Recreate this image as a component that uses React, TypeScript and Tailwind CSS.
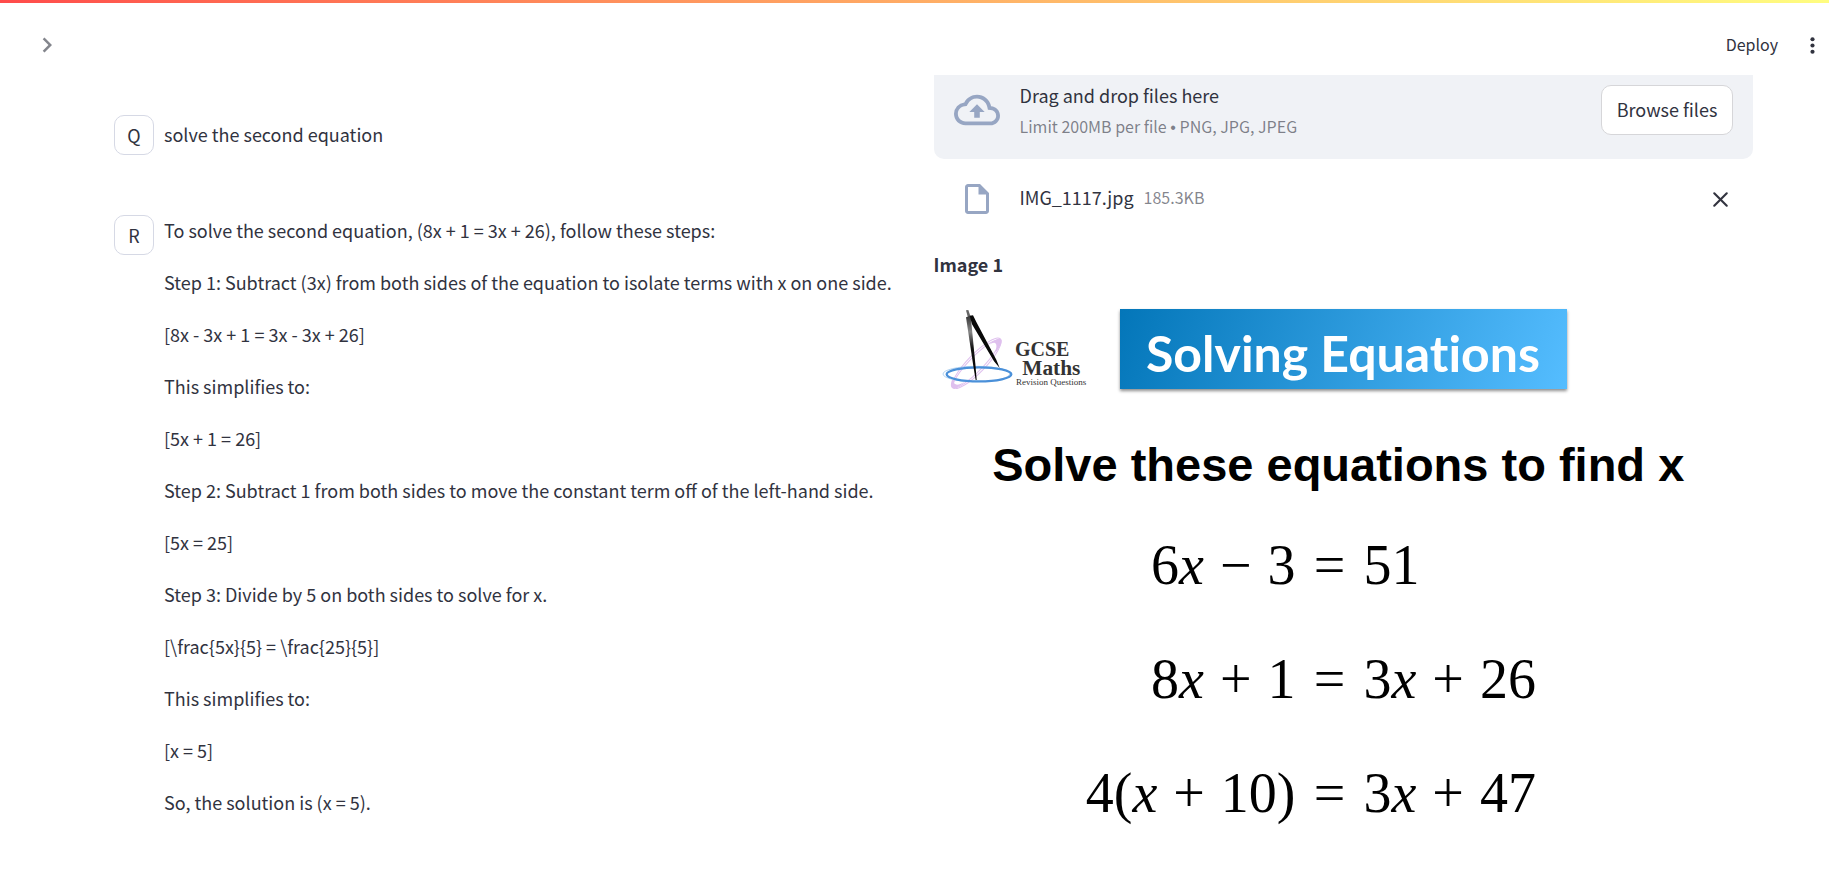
import { X } from "lucide-react";
import type { ReactNode } from "react";

const answer = [
  "To solve the second equation, (8x + 1 = 3x + 26), follow these steps:",
  "Step 1: Subtract (3x) from both sides of the equation to isolate terms with x on one side.",
  "[8x - 3x + 1 = 3x - 3x + 26]",
  "This simplifies to:",
  "[5x + 1 = 26]",
  "Step 2: Subtract 1 from both sides to move the constant term off of the left-hand side.",
  "[5x = 25]",
  "Step 3: Divide by 5 on both sides to solve for x.",
  "[\\frac{5x}{5} = \\frac{25}{5}]",
  "This simplifies to:",
  "[x = 5]",
  "So, the solution is (x = 5).",
];

function Header() {
  return (
    <header>
      <div className="h-[3px] bg-linear-to-r from-[#ff4b4b] to-[#fffd80]" />
      <div className="flex h-[72px] items-center justify-between pt-3 pr-1 pl-8">
        <button type="button" aria-label="Open sidebar" className="text-[#31333f]/60">
          <svg viewBox="0 0 24 24" className="size-[30px] fill-current">
            <path d="M10 6 8.59 7.41 13.17 12l-4.58 4.59L10 18l6-6z" />
          </svg>
        </button>
        <div className="flex items-center gap-[22px]">
          <button type="button" className="pb-0.5 text-base leading-6">
            Deploy
          </button>
          <button type="button" aria-label="Main menu">
            <svg viewBox="0 0 24 24" className="size-[25px] fill-current">
              <circle cx="12" cy="6" r="2" />
              <circle cx="12" cy="12" r="2" />
              <circle cx="12" cy="18" r="2" />
            </svg>
          </button>
        </div>
      </div>
    </header>
  );
}

function Message({ avatar, children }: { avatar: string; children: ReactNode }) {
  return (
    <article className="flex items-start gap-[10px] p-5">
      <div className="flex size-10 shrink-0 items-center justify-center rounded-[10px] border border-[#d6d9e5] leading-8">
        {avatar}
      </div>
      <div className="min-w-0 flex-1">{children}</div>
    </article>
  );
}

function Uploader() {
  return (
    <section aria-label="File uploader">
      <div className="flex h-[84px] items-start gap-5 rounded-b-[10px] bg-[#f0f2f6] px-5 pt-[10px]">
        <svg viewBox="0 0 24 24" className="mt-0.5 size-[46px] shrink-0 fill-[#97a6c3]">
          <path d="M19.35 10.04A7.49 7.49 0 0 0 12 4C9.11 4 6.6 5.64 5.35 8.04A5.994 5.994 0 0 0 0 14c0 3.31 2.69 6 6 6h13c2.76 0 5-2.24 5-5 0-2.64-2.05-4.78-4.65-4.96zM19 18H6c-2.21 0-4-1.79-4-4 0-2.05 1.53-3.76 3.56-3.97l1.07-.11.5-.95A5.469 5.469 0 0 1 12 6c2.62 0 4.88 1.86 5.39 4.43l.3 1.5 1.53.11A2.98 2.98 0 0 1 22 15c0 1.65-1.35 3-3 3zM8 13h2.55v3h2.9v-3H16l-4-4z" />
        </svg>
        <div className="flex-1">
          <p className="leading-5">Drag and drop files here</p>
          <p className="mt-[5px] text-base leading-8 text-[#31333f]/60">
            Limit 200MB per file <span className="font-['Liberation_Sans'] leading-none">•</span> PNG, JPG, JPEG
          </p>
        </div>
        <button
          type="button"
          className="h-[50px] w-[132px] rounded-[10px] border border-[#d6d6d9] bg-white pb-0.5 leading-8"
        >
          Browse files
        </button>
      </div>
      <div className="flex items-center pt-[22px] pr-5 pl-[25px]">
        <svg viewBox="0 0 24 24" className="mr-[25px] size-9 fill-[#97a6c3]">
          <path d="M14 2H6c-1.1 0-1.99.9-1.99 2L4 20c0 1.1.89 2 1.99 2H18c1.1 0 2-.9 2-2V8l-6-6zM6 20V4h7v5h5v11H6z" />
        </svg>
        <span className="mr-[10px] pb-1 leading-8">IMG_1117.jpg</span>
        <span className="flex-1 pb-1 text-base leading-8 text-[#31333f]/60">185.3KB</span>
        <button type="button" aria-label="Remove IMG_1117.jpg">
          <X size={25} strokeWidth={2} />
        </button>
      </div>
    </section>
  );
}

function Logo() {
  return (
    <svg viewBox="12 30 468 300" className="h-[100px] w-[156px] shrink-0" role="img" aria-label="GCSE Maths Revision Questions">
      <defs>
        <linearGradient id="leg" x1="0" y1="0" x2="0" y2="1">
          <stop offset="0" stopColor="#333" />
          <stop offset=".25" stopColor="#888" />
          <stop offset=".5" stopColor="#111" />
          <stop offset="1" stopColor="#000" />
        </linearGradient>
      </defs>
      <g fill="none" stroke="#dfc0ee">
        <ellipse cx="140" cy="220" rx="102" ry="27" strokeWidth="3" transform="rotate(-46 140 220)" />
        <ellipse cx="138" cy="222" rx="97" ry="21" strokeWidth="3" transform="rotate(-46 138 222)" />
      </g>
      <path d="M178 165c14-16 27-21 35-18 6 8-3 25-17 41 4-15 5-25-1-29-5-2-10 1-17 6zM66 270c-5 12-5 25 4 25 12 0 23-10 34-20-12 7-22 11-27 8-5-2-6-7-5-13z" fill="#dfc0ee" />
      <ellipse cx="139" cy="252" rx="100" ry="23" fill="none" stroke="#8dbce9" strokeWidth="2" />
      <ellipse cx="147" cy="253" rx="97" ry="21" fill="none" stroke="#4a90d9" strokeWidth="7" />
      <path d="m108 61 7-1 6 18-6 9z" fill="#666" />
      <path d="m108 82 14-5 14 144 4 49h-3l-8-48z" fill="url(#leg)" />
      <path d="m119 77 10-1 10 20 60 113 10 25-17-20-66-111z" fill="#080808" />
      <text fill="#333" fontFamily="'Liberation Serif', serif" fontWeight="700">
        <tspan x="255" y="199" fontSize="60">GCSE</tspan>
        <tspan x="277" y="255" fontSize="64">Maths</tspan>
        <tspan x="258" y="286" fontSize="27" fontWeight="400">Revision Questions</tspan>
      </text>
    </svg>
  );
}

function Op({ children }: { children: string }) {
  return <span className="mx-4">{children}</span>;
}

function Equation({ left, right }: { left: ReactNode; right: ReactNode }) {
  return (
    <div className="grid grid-cols-[362px_68px_1fr] text-[56px] leading-[114px]">
      <span className="text-right">{left}</span>
      <span className="text-center">=</span>
      <span>{right}</span>
    </div>
  );
}

function Worksheet() {
  return (
    <figure className="bg-white text-black">
      <div className="flex items-start gap-[30px]">
        <Logo />
        <div className="mt-[9px] flex h-20 w-[447px] items-center justify-center bg-linear-[110deg] from-[#0376b9] to-[#55bdff] pt-2 font-['Lato'] text-[50px] leading-[60px] font-bold text-white shadow-[0_2px_3px_rgba(0,0,0,0.45)] [font-variant-ligatures:none]">
          Solving Equations
        </div>
      </div>
      <h2 className="mt-[38px] pr-[10px] text-center font-['Liberation_Sans'] text-[47px] leading-[54px] font-bold">
        Solve these equations to find x
      </h2>
      <div className="mt-4 font-['Liberation_Serif']">
        <Equation left={<>6<i>x</i><Op>−</Op>3</>} right="51" />
        <Equation left={<>8<i>x</i><Op>+</Op>1</>} right={<>3<i>x</i><Op>+</Op>26</>} />
        <Equation left={<>4(<i>x</i><Op>+</Op>10)</>} right={<>3<i>x</i><Op>+</Op>47</>} />
      </div>
    </figure>
  );
}

export default function App() {
  return (
    <div className="min-h-screen bg-white font-['Noto_Sans_CJK_SC','Noto_Sans_CJK_JP',sans-serif] text-lg text-[#31333f]">
      <Header />
      <main className="grid grid-cols-2 gap-5 pr-[76px] pl-[94px]">
        <div className="pt-5">
          <Message avatar="Q">
            <p className="leading-[38px]">solve the second equation</p>
          </Message>
          <div className="h-5" />
          <Message avatar="R">
            <div className="-mt-px flex flex-col gap-5 leading-8">
              {answer.map((line, i) => (
                <p key={i}>{line}</p>
              ))}
            </div>
          </Message>
        </div>
        <div>
          <Uploader />
          <p className="mt-[31px] mb-5 leading-8 font-bold">Image 1</p>
          <Worksheet />
        </div>
      </main>
    </div>
  );
}
